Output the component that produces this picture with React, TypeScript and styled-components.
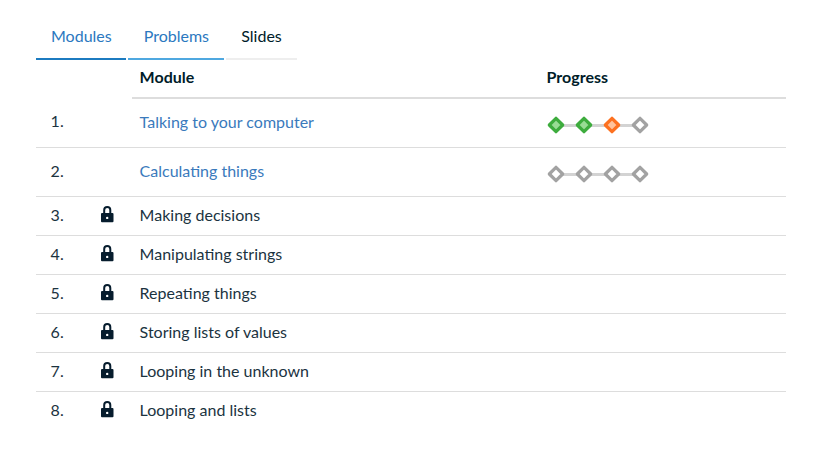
import React from "react";
import styled, { createGlobalStyle } from "styled-components";

const Global = createGlobalStyle`
  body { margin: 0; background: #fff; }
  * { box-sizing: border-box; }
`;
const Page = styled.main`
  width: 750px;
  margin-left: 36px;
  padding-top: 15px;
  font: 16px/24px Lato, sans-serif;
  color: #001c29;
`;
const Tabs = styled.nav`
  display: flex;
  gap: 2px;
`;
const Tab = styled.a<{ $color: string; $line: string; $width: number; $inset?: number }>`
  width: ${(p) => p.$width}px;
  height: 45px;
  padding: 9px 0 0 ${(p) => p.$inset ?? 15}px;
  color: ${(p) => p.$color};
  border-bottom: 2px solid ${(p) => p.$line};
`;
const Row = styled.div<{ $tall?: boolean; $first?: boolean }>`
  display: grid;
  grid-template-columns: 64px 39.6px 407.4px 1fr;
  align-items: center;
  height: ${(p) => (p.$first ? 48 : p.$tall ? 49 : 39)}px;
  border-top: ${(p) => (p.$first ? "none" : "1px solid #ddd")};
`;
const Header = styled.div`
  display: grid;
  grid-template-columns: 407px 1fr;
  margin-left: 96px;
  height: 39px;
  padding: 5px 0 0 7.6px;
  font-weight: 700;
  border-bottom: 2px solid #ddd;
`;
const Num = styled.span<{ $raised?: boolean }>`
  padding: 0 0 ${(p) => (p.$raised ? 4 : 2)}px 14.6px;
  color: #1b333f;
`;
const Title = styled.span<{ $link?: boolean }>`
  padding-bottom: 2px;
  color: ${(p) => (p.$link ? "#3a7abc" : "#1b333f")};
`;
const Icon = styled.svg`
  display: block;
`;
const LockIcon = styled(Icon)`
  margin-bottom: 2px;
`;
const ProgressTrack = styled(Icon)`
  margin-top: 4px;
`;

const COLORS = {
  done: ["#3dac3d", "#98dc94"],
  active: ["#fd7120", "#ffc39c"],
  todo: ["#a2a2a2", "#fff"],
};
type State = keyof typeof COLORS;

const Lock = () => (
  <LockIcon width="16" height="20" viewBox="0 0 16 20">
    <path d="M4.200 9V5a3.050 3.050 0 0 1 6.100 0v4" fill="none" stroke="#061c2d" strokeWidth="2" />
    <path fillRule="evenodd" fill="#061c2d" d="M2 8h10.500a1 1 0 0 1 1 1v7.200a1 1 0 0 1-1 1H2a1 1 0 0 1-1-1V9a1 1 0 0 1 1-1zm5.200 3.700a1.200 1.200 0 1 0 0 2.400 1.200 1.200 0 0 0 0-2.400z" />
  </LockIcon>
);

const Progress = ({ states }: { states: State[] }) => (
  <ProgressTrack width="104" height="20" viewBox="0 0 104 20">
    <path d="M9 10.500H93" stroke="#d3d3d3" strokeWidth="3" />
    {states.map((s, i) => (
      <path key={i} d="M0-6.700L6.700 0L0 6.700L-6.700 0Z" transform={`translate(${9 + i * 28} 10)`} fill={COLORS[s][1]} stroke={COLORS[s][0]} strokeWidth="3.200" strokeLinejoin="round" />
    ))}
  </ProgressTrack>
);

const modules: { title: string; progress?: State[] }[] = [
  { title: "Talking to your computer", progress: ["done", "done", "active", "todo"] },
  { title: "Calculating things", progress: ["todo", "todo", "todo", "todo"] },
  { title: "Making decisions" },
  { title: "Manipulating strings" },
  { title: "Repeating things" },
  { title: "Storing lists of values" },
  { title: "Looping in the unknown" },
  { title: "Looping and lists" },
];

export default function App() {
  return (
    <Page>
      <Global />
      <Tabs>
        <Tab $width={90} $color="#2b78c0" $line="#1c7bc0">Modules</Tab>
        <Tab $width={96} $inset={15.7} $color="#2b78c0" $line="#4fa8e0">Problems</Tab>
        <Tab $width={71} $inset={15.3} $color="#001c29" $line="#eee">Slides</Tab>
      </Tabs>
      <Header><span>Module</span><span>Progress</span></Header>
      {modules.map((m, i) => (
        <Row key={m.title} $tall={!!m.progress} $first={i === 0}>
          <Num $raised={i === 0}>{i + 1}.</Num>
          <span>{!m.progress && <Lock />}</span>
          <Title $link={!!m.progress}>{m.title}</Title>
          {m.progress && <Progress states={m.progress} />}
        </Row>
      ))}
    </Page>
  );
}
